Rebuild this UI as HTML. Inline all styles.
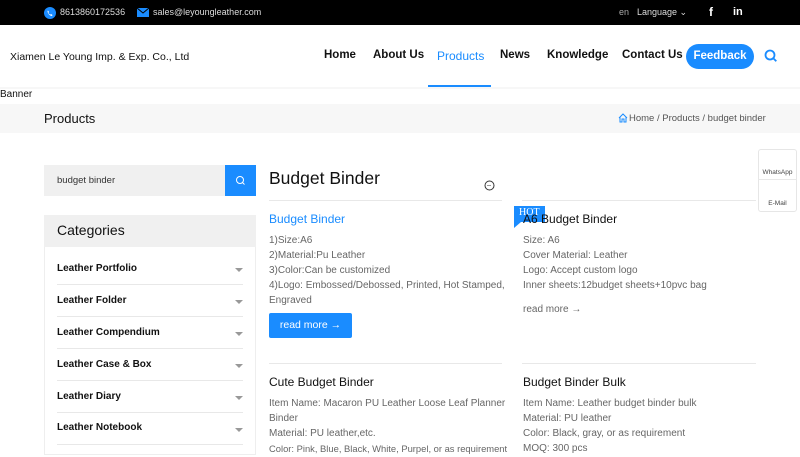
<!DOCTYPE html>
<html><head><style>
*{margin:0;padding:0;box-sizing:border-box}
body{width:800px;height:450px;overflow:hidden;font-family:"Liberation Sans",Arial,sans-serif;background:#fff;position:relative;color:#111}
.a{position:absolute;white-space:nowrap}
.top{left:0;top:0;width:800px;height:25px;background:#000}
.tt{color:#ddd;font-size:9px}
.nav{font-size:11.5px;font-weight:bold;color:#111}
.g{font-size:10px;color:#666}
.cat{left:57px;font-size:10px;font-weight:bold;color:#111}
.line{height:1px;background:#e8e8e8}
.arr{left:235px;width:0;height:0;border-left:4px solid transparent;border-right:4px solid transparent;border-top:4px solid #999}
</style></head><body>
<div class="a top"></div>
<svg class="a" style="left:44px;top:7px" width="12" height="12" viewBox="0 0 12 12"><circle cx="6" cy="6" r="6" fill="#1a8cff"/><path d="M4 3.5l1 1.5-.6.7c.4.9 1 1.5 1.9 1.9l.7-.6 1.5 1-.5 1C6 9 3.5 6.5 3.5 4z" fill="#fff"/></svg>
<div class="a tt" style="left:60px;top:7px">8613860172536</div>
<svg class="a" style="left:137px;top:8px" width="12" height="9" viewBox="0 0 12 9"><rect width="12" height="9" fill="#1a8cff"/><path d="M0 0l6 5 6-5" stroke="#000" fill="none" stroke-width="1"/></svg>
<div class="a tt" style="left:153px;top:7px">sales@leyoungleather.com</div>
<div class="a tt" style="left:619px;top:7px;color:#aaa">en</div>
<div class="a tt" style="left:637px;top:7px">Language ⌄</div>
<div class="a" style="left:709px;top:5px;color:#fff;font-weight:bold;font-size:12px">f</div>
<div class="a" style="left:733px;top:6px;color:#fff;font-weight:bold;font-size:11px">in</div>
<div class="a" style="left:10px;top:51px;font-size:10.5px;color:#111">Xiamen Le Young Imp. &amp; Exp. Co., Ltd</div>
<div class="a nav" style="left:324px;top:49px">Home</div>
<div class="a nav" style="left:373px;top:49px">About Us</div>
<div class="a nav" style="left:437px;top:49px;color:#1a8cff;font-weight:normal;font-size:12px">Products</div>
<div class="a" style="left:428px;top:85px;width:63px;height:2px;background:#1a8cff"></div>
<div class="a nav" style="left:500px;top:49px">News</div>
<div class="a nav" style="left:547px;top:49px">Knowledge</div>
<div class="a nav" style="left:622px;top:49px">Contact Us</div>
<div class="a" style="left:686px;top:44px;width:68px;height:25px;border-radius:13px;background:#1a8cff;color:#fff;font-size:11.5px;font-weight:bold;text-align:center;line-height:25px">Feedback</div>
<svg class="a" style="left:764px;top:49px" width="14" height="14" viewBox="0 0 14 14"><circle cx="6" cy="6" r="4.5" stroke="#1a8cff" stroke-width="1.8" fill="none"/><path d="M9.3 9.3l3 3" stroke="#1a8cff" stroke-width="1.8"/></svg>
<div class="a" style="left:0;top:87px;width:800px;height:2px;background:#f7f7f7"></div>
<div class="a" style="left:0;top:89px;font-size:10px;color:#111">Banner</div>
<div class="a" style="left:0;top:104px;width:800px;height:29px;background:#f7f7f7"></div>
<div class="a" style="left:44px;top:111px;font-size:13px;color:#111">Products</div>
<svg class="a" style="left:618px;top:113px" width="10" height="10" viewBox="0 0 10 10"><path d="M1 5L5 1l4 4M2 4v5h2V6h2v3h2V4" stroke="#1a8cff" fill="none"/></svg>
<div class="a g" style="left:629px;top:113px;font-size:9.5px;color:#555">Home / Products / budget binder</div>
<div class="a" style="left:44px;top:165px;width:211px;height:31px;background:#f0f0f0"></div>
<div class="a" style="left:57px;top:175px;font-size:9.5px;color:#333">budget binder</div>
<div class="a" style="left:225px;top:165px;width:31px;height:31px;background:#1a8cff"></div>
<svg class="a" style="left:235px;top:175px" width="11" height="11" viewBox="0 0 11 11"><circle cx="5" cy="5" r="3.5" stroke="#fff" fill="none"/><path d="M7.5 7.5l2 2" stroke="#fff"/></svg>
<div class="a" style="left:44px;top:215px;width:212px;height:240px;border:1px solid #eee"></div>
<div class="a" style="left:44px;top:215px;width:212px;height:32px;background:#f0f0f0"></div>
<div class="a" style="left:57px;top:222px;font-size:14px;color:#111">Categories</div>
<div class="a cat" style="top:263px">Leather Portfolio</div><div class="a arr" style="top:268px"></div><div class="a line" style="left:57px;top:284px;width:186px"></div>
<div class="a cat" style="top:295px">Leather Folder</div><div class="a arr" style="top:300px"></div><div class="a line" style="left:57px;top:316px;width:186px"></div>
<div class="a cat" style="top:327px">Leather Compendium</div><div class="a arr" style="top:332px"></div><div class="a line" style="left:57px;top:348px;width:186px"></div>
<div class="a cat" style="top:359px">Leather Case &amp; Box</div><div class="a arr" style="top:364px"></div><div class="a line" style="left:57px;top:380px;width:186px"></div>
<div class="a cat" style="top:391px">Leather Diary</div><div class="a arr" style="top:396px"></div><div class="a line" style="left:57px;top:412px;width:186px"></div>
<div class="a cat" style="top:422px">Leather Notebook</div><div class="a arr" style="top:428px"></div><div class="a line" style="left:57px;top:444px;width:186px"></div>
<div class="a" style="left:269px;top:168px;font-size:17.5px;color:#111">Budget Binder</div>
<svg class="a" style="left:484px;top:180px" width="11" height="11" viewBox="0 0 11 11"><circle cx="5.5" cy="5.5" r="4.5" stroke="#333" fill="none"/><path d="M3.5 5.5h4" stroke="#333" stroke-dasharray="1 1"/></svg>
<div class="a line" style="left:269px;top:200px;width:233px"></div>
<div class="a line" style="left:522px;top:200px;width:234px"></div>
<div class="a" style="left:269px;top:212px;font-size:12px;color:#1a8cff">Budget Binder</div>
<div class="a g" style="left:269px;top:233px;line-height:15px;white-space:normal;width:250px">1)Size:A6<br>2)Material:Pu Leather<br>3)Color:Can be customized<br>4)Logo: Embossed/Debossed, Printed, Hot Stamped,<br>Engraved</div>
<div class="a" style="left:269px;top:313px;width:83px;height:25px;background:#1a8cff;border-radius:2px;color:#fff;font-size:10.5px;line-height:25px;text-align:center">read more →</div>
<div class="a" style="left:514px;top:206px;width:31px;height:16px;background:#1a8cff;color:#fff;font-family:'Liberation Serif',serif;font-size:10px;padding-left:5px;line-height:14px">HOT</div>
<div class="a" style="left:514px;top:222px;width:0;height:0;border-left:7px solid transparent;border-top:6px solid #1a8cff;transform:scaleX(-1)"></div>
<div class="a" style="left:523px;top:212px;font-size:12px;color:#111">A6 Budget Binder</div>
<div class="a g" style="left:523px;top:233px;line-height:15px">Size: A6<br>Cover Material: Leather<br>Logo: Accept custom logo<br>Inner sheets:12budget sheets+10pvc bag</div>
<div class="a g" style="left:523px;top:304px">read more →</div>
<div class="a line" style="left:269px;top:363px;width:233px"></div>
<div class="a line" style="left:522px;top:363px;width:234px"></div>
<div class="a" style="left:269px;top:375px;font-size:12px;color:#111">Cute Budget Binder</div>
<div class="a g" style="left:269px;top:396px;line-height:15px">Item Name: Macaron PU Leather Loose Leaf Planner<br>Binder<br>Material: PU leather,etc.<br><span style="font-size:9.4px">Color: Pink, Blue, Black, White, Purpel, or as requirement</span></div>
<div class="a" style="left:523px;top:375px;font-size:12px;color:#111">Budget Binder Bulk</div>
<div class="a g" style="left:523px;top:396px;line-height:15px">Item Name: Leather budget binder bulk<br>Material: PU leather<br>Color: Black, gray, or as requirement<br>MOQ: 300 pcs</div>
<div class="a" style="left:758px;top:149px;width:39px;height:63px;border:1px solid #e6e6e6;border-radius:3px;background:#fff"></div>
<div class="a line" style="left:758px;top:179px;width:39px"></div>
<div class="a" style="left:758px;top:169px;width:39px;text-align:center;font-size:6.5px;color:#444">WhatsApp</div>
<div class="a" style="left:758px;top:200px;width:39px;text-align:center;font-size:6.5px;color:#444">E-Mail</div>
</body></html>
